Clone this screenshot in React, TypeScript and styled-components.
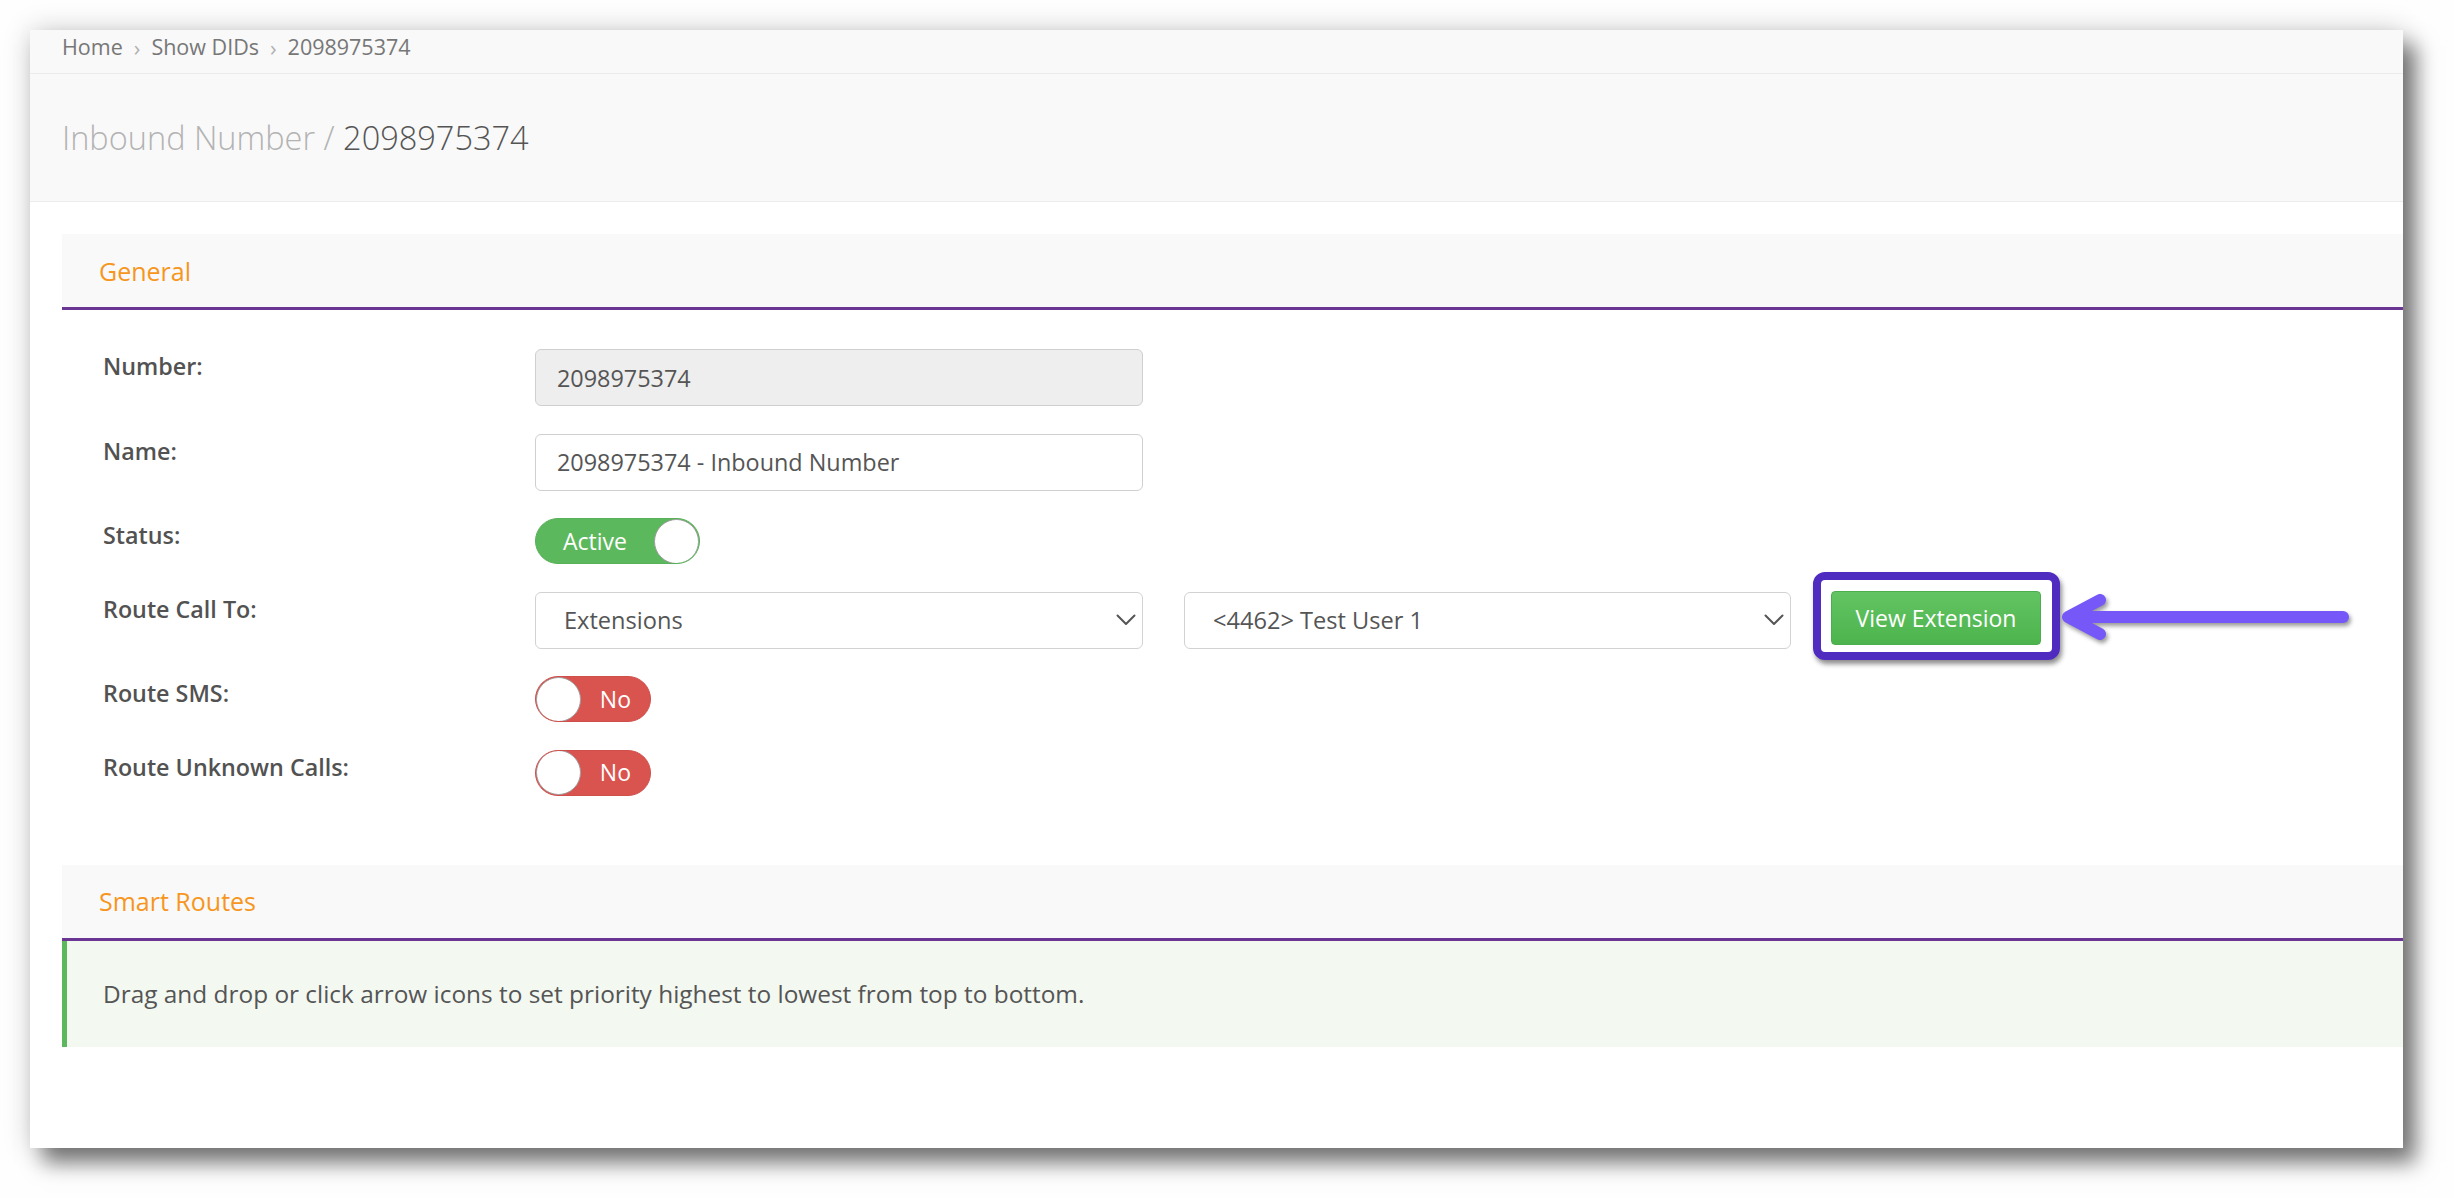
import React from "react";
import styled, { createGlobalStyle } from "styled-components";

const GlobalStyle = createGlobalStyle`
  html, body {
    margin: 0;
    padding: 0;
    background: #fefefe;
    font-family: "Open Sans", "Liberation Sans", sans-serif;
  }
  * { box-sizing: border-box; }
`;

const Page = styled.div`
  width: 2454px;
  height: 1198px;
  padding: 30px 0 0 30px;
  overflow: hidden;
`;

const Window = styled.div`
  width: 2373px;
  height: 1118px;
  background: #ffffff;
  overflow: hidden;
  box-shadow: 13px 15px 20px rgba(0, 0, 0, 0.5), 0 0 26px rgba(0, 0, 0, 0.18);
`;

const Breadcrumb = styled.nav`
  height: 44px;
  background: #f9f9f9;
  border-bottom: 1px solid #ececec;
  padding: 2px 0 0 32px;
  display: flex;
  align-items: flex-start;
  gap: 9px;
  font-size: 21.5px;
  line-height: 30px;
  color: #777777;
`;

const Crumb = styled.span`
  color: #777777;
`;

const Sep = styled.span`
  color: #b0b0b0;
  font-size: 22px;
  padding: 0 2px;
`;

const Header = styled.header`
  height: 128px;
  background: #f9f9f9;
  border-bottom: 1px solid #ececec;
  padding-left: 32px;
  display: flex;
  align-items: center;
`;

const Title = styled.h1`
  margin: 0;
  font-size: 32.5px;
  font-weight: 300;
  color: #b3b3b3;
  line-height: 40px;
`;

const TitleStrong = styled.span`
  color: #555555;
`;

const Content = styled.main`
  padding: 32px 0 0 32px;
`;

const SectionHead = styled.div`
  height: 76px;
  background: #f9f9f9;
  border-bottom: 3px solid #6b3593;
  padding-left: 37px;
  display: flex;
  align-items: center;
  font-size: 25px;
  color: #f6961e;
`;

const FormBody = styled.div`
  padding: 39px 0 69px 41px;
  display: flex;
  flex-direction: column;
  gap: 27.6px;
`;

const Row = styled.div`
  display: flex;
  align-items: flex-start;
`;

const Label = styled.div`
  width: 432px;
  flex-shrink: 0;
  font-size: 23.3px;
  font-weight: 600;
  color: #525252;
  line-height: 34px;
`;

const Controls = styled.div`
  display: flex;
  align-items: center;
`;

const TextInput = styled.div<{ $readOnly?: boolean }>`
  width: 608px;
  height: 57px;
  border: 1px solid #cfcfcf;
  border-radius: 6px;
  background: ${(p) => (p.$readOnly ? "#eeeeee" : "#ffffff")};
  padding: 0 21px;
  display: flex;
  align-items: center;
  font-size: 23.4px;
  color: #555555;
`;

const SelectBox = styled.div<{ $gap: number; $width: number }>`
  width: ${(p) => p.$width}px;
  height: 57px;
  border: 1px solid #d2d2d2;
  border-radius: 6px;
  background: #ffffff;
  padding: 0 6px 0 28px;
  margin-right: ${(p) => p.$gap}px;
  display: flex;
  align-items: center;
  justify-content: space-between;
  font-size: 23.6px;
  color: #555555;
`;

const Toggle = styled.div<{ $on: boolean; $width: number }>`
  width: ${(p) => p.$width}px;
  height: 46px;
  border-radius: 23px;
  background: ${(p) => (p.$on ? "#5cb85c" : "#d9534f")};
  border: 1px solid ${(p) => (p.$on ? "#58b058" : "#cf4f4b")};
  display: flex;
  flex-direction: ${(p) => (p.$on ? "row" : "row-reverse")};
  align-items: center;
  justify-content: space-between;
  color: #ffffff;
  font-size: 23px;
  overflow: hidden;
`;

const ToggleText = styled.span<{ $on: boolean }>`
  padding-left: ${(p) => (p.$on ? 27 : 0)}px;
  padding-right: ${(p) => (p.$on ? 0 : 19)}px;
  line-height: 1;
`;

const Knob = styled.span`
  width: 45px;
  height: 45px;
  border-radius: 50%;
  background: #ffffff;
  border: 1px solid #9e9e9e;
  flex-shrink: 0;
`;

const Highlight = styled.div`
  margin: -20px 0 -12px 0;
  border: 8px solid #4f2bbf;
  border-radius: 12px;
  padding: 11px 11px 7px 10px;
  background: #ffffff;
  box-shadow: 2px 4px 5px rgba(0, 0, 0, 0.45);
`;

const Button = styled.button`
  display: block;
  width: 210px;
  height: 54px;
  border: 1px solid #4cae4c;
  border-radius: 4px;
  background: linear-gradient(#62c462, #4db44d);
  color: #ffffff;
  font-family: "Open Sans", "Liberation Sans", sans-serif;
  font-size: 23px;
  padding: 0;
  cursor: pointer;
`;

const ArrowSvg = styled.svg`
  display: block;
  margin: -10px 0;
  filter: drop-shadow(2px 3px 2px rgba(0, 0, 0, 0.4));
`;

const Info = styled.div`
  height: 106px;
  background: #f3f8f1;
  border-left: 5px solid #5cb85c;
  padding-left: 36px;
  display: flex;
  align-items: center;
  font-size: 24.4px;
  color: #555555;
`;

const Chevron = () => (
  <svg width="20" height="12" viewBox="0 0 20 12">
    <polyline points="1.5,1.5 10,10 18.5,1.5" fill="none" stroke="#555" strokeWidth="2" strokeLinecap="round" strokeLinejoin="round" />
  </svg>
);

const Arrow = () => (
  <ArrowSvg width="300" height="60" viewBox="0 0 300 60">
    <polyline points="40,10 8,27 40,44" fill="none" stroke="#7658f8" strokeWidth="12" strokeLinecap="round" strokeLinejoin="round" />
    <line x1="10" y1="27" x2="283" y2="27" stroke="#7658f8" strokeWidth="12" strokeLinecap="round" />
  </ArrowSvg>
);

export default function App() {
  return (
    <>
      <GlobalStyle />
      <Page>
        <Window>
          <Breadcrumb>
            <Crumb>Home</Crumb>
            <Sep>›</Sep>
            <Crumb>Show DIDs</Crumb>
            <Sep>›</Sep>
            <Crumb>2098975374</Crumb>
          </Breadcrumb>
          <Header>
            <Title>
              Inbound Number / <TitleStrong>2098975374</TitleStrong>
            </Title>
          </Header>
          <Content>
            <SectionHead>General</SectionHead>
            <FormBody>
              <Row>
                <Label>Number:</Label>
                <TextInput $readOnly>2098975374</TextInput>
              </Row>
              <Row>
                <Label>Name:</Label>
                <TextInput>2098975374 - Inbound Number</TextInput>
              </Row>
              <Row>
                <Label>Status:</Label>
                <Toggle $on $width={165}>
                  <ToggleText $on>Active</ToggleText>
                  <Knob />
                </Toggle>
              </Row>
              <Row>
                <Label>Route Call To:</Label>
                <Controls>
                  <SelectBox $gap={41} $width={608}>
                    <span>Extensions</span>
                    <Chevron />
                  </SelectBox>
                  <SelectBox $gap={22} $width={607}>
                    <span>&lt;4462&gt; Test User 1</span>
                    <Chevron />
                  </SelectBox>
                  <Highlight>
                    <Button>View Extension</Button>
                  </Highlight>
                  <Arrow />
                </Controls>
              </Row>
              <Row>
                <Label>Route SMS:</Label>
                <Toggle $on={false} $width={116}>
                  <ToggleText $on={false}>No</ToggleText>
                  <Knob />
                </Toggle>
              </Row>
              <Row>
                <Label>Route Unknown Calls:</Label>
                <Toggle $on={false} $width={116}>
                  <ToggleText $on={false}>No</ToggleText>
                  <Knob />
                </Toggle>
              </Row>
            </FormBody>
            <SectionHead>Smart Routes</SectionHead>
            <Info>Drag and drop or click arrow icons to set priority highest to lowest from top to bottom.</Info>
          </Content>
        </Window>
      </Page>
    </>
  );
}
